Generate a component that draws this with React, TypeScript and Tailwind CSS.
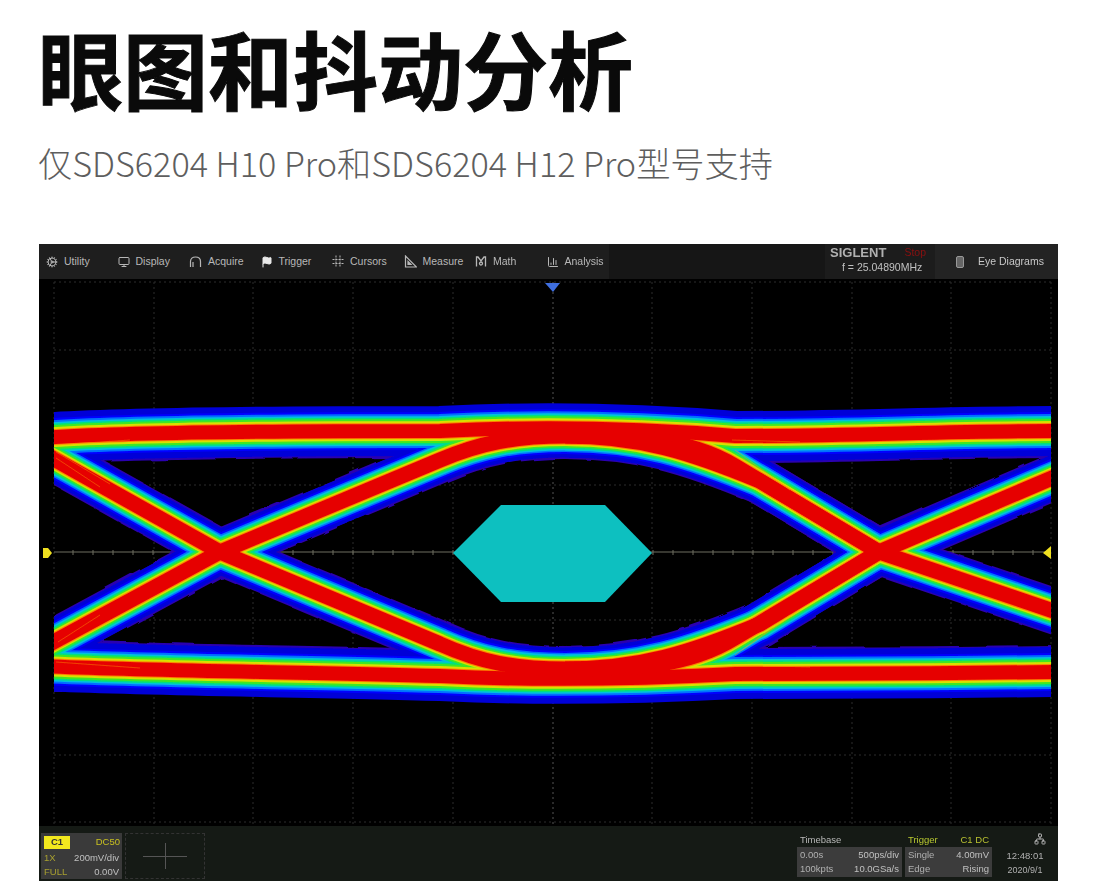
import { Flag, Monitor, Cog, ChartColumn, Network } from 'lucide-react'

const MONO = "font-['Liberation_Sans',sans-serif]"

// colour bands of the persistence plot, outer to inner: colour, rail width, edge width
const bands: [string, number, number][] = [
  ['#2a00b0', 54, 46],
  ['#0000d8', 50, 43],
  ['#0000ff', 38, 36],
  ['#0070ff', 34, 32],
  ['#00c0e0', 30, 29],
  ['#00e080', 27, 26],
  ['#40e820', 24, 23],
  ['#d8e000', 20, 20],
  ['#ff8000', 16, 17],
  ['#e60000', 14, 15],
]

const rails = [
  'M40,438 C120,432 300,431 440,431 C500,428 600,425 735,436 C850,436 950,431 1060,431',
  'M40,666 C150,671 300,672 440,676 C520,680 620,680 735,674 C850,674 950,673 1060,672',
]
const edges = [
  'M20,660 L220,552 L440,460 C480,443 515,436 565,436 C625,436 685,436 735,466 L879,552 L1080,620',
  'M20,440 L220,552 L440,644 C480,662 515,669 565,669 C625,669 685,669 735,638 L879,552 L1080,466',
  // the falling and rising edges fan out before the second crossing
  'M565,436 C640,436 690,452 760,481 L879,552',
  'M565,669 C640,669 690,653 760,624 L879,552',
]

const gridX = [54, 154, 253, 353, 453, 553, 652, 752, 852, 951, 1051]
const gridY = [282, 350, 417, 485, 552, 620, 687, 755, 822]
const ticks = Array.from({ length: 49 }, (_, i) => 73 + i * 20)

function AcquireIcon() {
  return (
    <svg width="13" height="12" viewBox="0 0 13 12" fill="none" stroke="currentColor" strokeWidth="1.2">
      <path d="M1.5 11V5.5C1.5 2.5 3.5 1 6.5 1s5 1.5 5 4.5V11" />
      <path d="M4 11V6" />
    </svg>
  )
}

function CursorsIcon() {
  return (
    <svg width="12" height="13" viewBox="0 0 12 13" fill="none" stroke="currentColor" strokeWidth="1">
      <path d="M4 0.5v12M8 0.5v12M0.5 4.5h11M0.5 8.5h11" strokeDasharray="2 1" />
    </svg>
  )
}

function MeasureIcon() {
  return (
    <svg width="13" height="13" viewBox="0 0 13 13" fill="none" stroke="currentColor" strokeWidth="1.2">
      <path d="M1.5 1v11h11L1.5 1z" />
      <path d="M4 9.5h3L4 6.5z" />
    </svg>
  )
}

function MathIcon() {
  return (
    <svg width="12" height="11" viewBox="0 0 12 11" fill="none" stroke="currentColor" strokeWidth="1.3">
      <path d="M1.5 10.5V1h1.5L6 5l3-4h1.5v9.5" />
      <circle cx="6" cy="7.5" r="1.5" />
    </svg>
  )
}

const menu = [
  { label: 'Utility', icon: <Cog size={12} /> },
  { label: 'Display', icon: <Monitor size={12} /> },
  { label: 'Acquire', icon: <AcquireIcon /> },
  { label: 'Trigger', icon: <Flag size={12} fill="#e8e8e8" className="text-[#e8e8e8]" /> },
  { label: 'Cursors', icon: <CursorsIcon /> },
  { label: 'Measure', icon: <MeasureIcon /> },
  { label: 'Math', icon: <MathIcon /> },
  { label: 'Analysis', icon: <ChartColumn size={12} /> },
]

function EyePlot() {
  return (
    <svg viewBox="39 279 1019 547" className="block h-[547px] w-[1019px]">
      <defs>
        <clipPath id="plot-area">
          <rect x="54" y="282" width="997" height="540" />
        </clipPath>
        <filter id="rough" x="-5%" y="-5%" width="110%" height="110%">
          <feTurbulence type="fractalNoise" baseFrequency="0.03" numOctaves="3" seed="4" />
          <feDisplacementMap in="SourceGraphic" scale="4" />
        </filter>
        <filter id="soft">
          <feGaussianBlur stdDeviation="0.6" />
        </filter>
      </defs>

      {gridX.map((x) => (
        <line key={x} x1={x} x2={x} y1="282" y2="826" stroke={x === 553 ? '#555' : '#2c2c2c'} strokeDasharray="2 3" />
      ))}
      {gridY.map((y) => (
        <line key={y} x1="54" x2="1051" y1={y} y2={y} stroke={y === 552 ? '#6e6e60' : '#2c2c2c'} strokeDasharray={y === 552 ? undefined : '2 3'} />
      ))}
      {ticks.map((x) => (
        <line key={x} x1={x} x2={x} y1="550" y2="555" stroke="#6e6e60" />
      ))}

      <g clipPath="url(#plot-area)" fill="none" filter="url(#soft)">
        {bands.map(([color, railW, edgeW], i) => (
          <g key={color} stroke={color} filter={i === 0 ? 'url(#rough)' : undefined}>
            {rails.map((d) => (
              <path key={d} d={d} strokeWidth={railW} />
            ))}
            {edges.map((d) => (
              <path key={d} d={d} strokeWidth={edgeW} />
            ))}
          </g>
        ))}
        {/* jitter streaks where the traces leave the rails */}
        <g stroke="#ff9a00" strokeWidth="0.8" opacity="0.55">
          <path d="M56,445 L130,440 M56,452 L110,484 M56,458 L100,487 M56,650 L110,622 M58,642 L100,615 M56,662 L140,668" />
          <path d="M732,440 L800,442 M735,450 L790,490 M742,458 L800,495 M735,655 L790,615 M742,650 L800,610 M732,665 L810,667" />
        </g>
      </g>

      <polygon points="453,553 501,505 605,505 652,553 605,602 501,602" fill="#0dc0c0" />

      <polygon points="545,283 560,283 553,292" fill="#3f6fe0" />
      <polygon points="43,548 48,548 52,553 48,558 43,558" fill="#f0e020" />
      <polygon points="1051,546 1051,559 1043,553" fill="#f0e020" />
    </svg>
  )
}

function InfoRow({ left, right, leftClass = 'text-[#b0b0b0]' }: { left: string; right: string; leftClass?: string }) {
  return (
    <div className="flex h-[14px] items-center justify-between px-[3px]">
      <span className={leftClass}>{left}</span>
      <span className="text-[#c0c0c0]">{right}</span>
    </div>
  )
}

export default function App() {
  return (
    <div className="h-[889px] w-[1094px] overflow-hidden bg-white">
      <h1 className="pl-[38px] pt-[24px] font-['Noto_Sans_CJK_SC',sans-serif] text-[85px] leading-[85px] font-bold text-[#0a0a0a] [-webkit-text-stroke:1px_#0a0a0a]">
        眼图和抖动分析
      </h1>
      <p className="mt-[33px] pl-[38px] font-['Noto_Sans_CJK_SC',sans-serif] text-[34.2px] leading-[40px] font-light text-[#5e5e5e]">
        仅SDS6204 H10 Pro和SDS6204 H12 Pro型号支持
      </p>

      <div className={`ml-[39px] mt-[62px] w-[1019px] bg-black ${MONO}`}>
        {/* top menu */}
        <div className="flex h-[35px] items-stretch bg-[#161616] text-[10.5px] text-[#b8b8b8]">
          <div className="flex w-[570px] items-center bg-[#1e1e1e] pl-[7px] blur-[0.4px]">
            {menu.map((m) => (
              <div key={m.label} className="flex w-[71.5px] shrink-0 items-center gap-[6px]">
                {m.icon}
                <span>{m.label}</span>
              </div>
            ))}
          </div>
          <div className="flex-1" />
          <div className="w-[110px] bg-[#1c1c1c] px-[5px] pt-[1px] blur-[0.4px]">
            <div className="flex h-[15px] items-center justify-between pr-[4px]">
              <span className="text-[13px] font-bold text-[#b0b0b0]">SIGLENT</span>
              <span className="text-[#8a1010]">Stop</span>
            </div>
            <div className="pl-[12px] text-[10.5px] leading-[14px] text-[#c0c0c0]">f = 25.04890MHz</div>
          </div>
          <div className="flex w-[123px] items-center gap-[14px] bg-[#232323] pl-[21px] blur-[0.4px]">
            <div className="h-[12px] w-[8px] rounded-[2px] border border-[#999] bg-[#666]" />
            <span className="text-[#c8c8c8]">Eye Diagrams</span>
          </div>
        </div>

        <EyePlot />

        {/* bottom status bar */}
        <div className="flex h-[55px] items-start bg-[#151a15] pt-[7px] text-[9.5px] leading-[14px]">
          <div className="ml-[2px] h-[46px] w-[81px] bg-[#3a3a3a] blur-[0.4px]">
            <div className="flex h-[18px] items-center justify-between pl-[3px] pr-[2px]">
              <span className="flex h-[13px] w-[26px] items-center justify-center bg-[#f2e81e] font-bold text-[#333]">C1</span>
              <span className="text-[#c8c020]">DC50</span>
            </div>
            <InfoRow left="1X" right="200mV/div" leftClass="text-[#a8a030]" />
            <InfoRow left="FULL" right="0.00V" leftClass="text-[#a8a030]" />
          </div>
          <div className="ml-[3px] flex h-[46px] w-[80px] items-center justify-center border border-dashed border-[#333]">
            <div className="relative h-[26px] w-[44px]">
              <div className="absolute left-0 top-[13px] h-px w-full bg-[#555]" />
              <div className="absolute left-[22px] top-0 h-full w-px bg-[#555]" />
            </div>
          </div>

          <div className="ml-[592px] w-[105px] blur-[0.4px]">
            <div className="h-[14px] px-[3px] text-[#b8b8b8]">Timebase</div>
            <div className="bg-[#3c3c3c] py-[1px]">
              <InfoRow left="0.00s" right="500ps/div" />
              <InfoRow left="100kpts" right="10.0GSa/s" />
            </div>
          </div>
          <div className="ml-[3px] w-[87px] blur-[0.4px]">
            <div className="flex h-[14px] justify-between px-[3px]">
              <span className="text-[#b8c830]">Trigger</span>
              <span className="text-[#b8c030]">C1 DC</span>
            </div>
            <div className="bg-[#3c3c3c] py-[1px]">
              <InfoRow left="Single" right="4.00mV" />
              <InfoRow left="Edge" right="Rising" />
            </div>
          </div>
          <div className="flex flex-1 flex-col items-center text-[#b0b0b0] blur-[0.4px]">
            <Network size={12} className="ml-[30px]" />
            <span className="mt-[4px]">12:48:01</span>
            <span className="text-[9px]">2020/9/1</span>
          </div>
        </div>
      </div>
    </div>
  )
}
